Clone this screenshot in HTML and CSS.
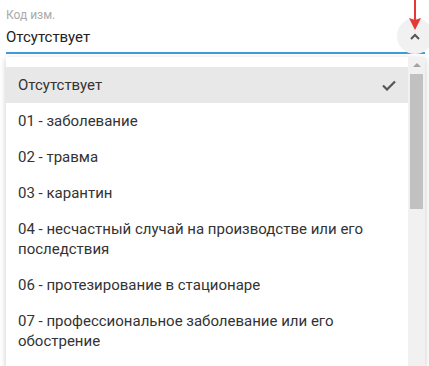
FILE: index.html
```html
<!DOCTYPE html>
<html lang="ru">
<head>
    <meta charset="UTF-8">
    <meta name="viewport" content="width=device-width, initial-scale=1.0">
    <title>Код изм.</title>
    <link rel="stylesheet" href="styles.css">
</head>
<body>

    <div class="field">
        <div class="field-label">Код изм.</div>
        <div class="field-value">Отсутствует</div>
        <div class="toggle">
            <svg width="10" height="7" viewBox="0 0 10 7">
                <path d="M1 6 L5 2 L9 6" fill="none" stroke="#555" stroke-width="2"/>
            </svg>
        </div>
        <svg class="marker" width="14" height="31" viewBox="0 0 14 31">
            <line x1="7" y1="0" x2="7" y2="21" stroke="#e53935" stroke-width="2"/>
            <path d="M1 18 L7 30 L13 18 L7 20 Z" fill="#e53935"/>
        </svg>
    </div>

    <div class="dropdown">
        <ul class="options">
            <li class="option selected">
                <span>Отсутствует</span>
                <svg width="14" height="11" viewBox="0 0 14 11">
                    <path d="M1 5.5 L5 9.5 L13 1.5" fill="none" stroke="#555" stroke-width="2.2"/>
                </svg>
            </li>
            <li class="option">01 - заболевание</li>
            <li class="option">02 - травма</li>
            <li class="option">03 - карантин</li>
            <li class="option">04 - несчастный случай на производстве или его последствия</li>
            <li class="option">06 - протезирование в стационаре</li>
            <li class="option">07 - профессиональное заболевание или его обострение</li>
        </ul>
        <div class="scrollbar">
            <div class="scroll-up"></div>
            <div class="scroll-thumb"></div>
        </div>
    </div>

</body>
</html>
```

FILE: styles.css
```css
body {
    margin: 0;
    padding: 0 4px 0 6px;
    font-family: Roboto, "Liberation Sans", sans-serif;
    background: #fff;
    overflow: hidden;
    height: 366px;
}

.field {
    position: relative;
    padding-top: 7px;
    padding-bottom: 5px;
    border-bottom: 2px solid #3d9bd8;
}

.field-label {
    font-size: 12px;
    line-height: 16px;
    color: #aaa;
}

.field-value {
    margin-top: 4px;
    font-size: 15px;
    line-height: 20px;
    color: #222;
}

.toggle {
    position: absolute;
    right: -8px;
    top: 18px;
    width: 36px;
    height: 36px;
    border-radius: 50%;
    background: #f1f1f1;
    display: flex;
    align-items: center;
    justify-content: center;
}

.marker {
    position: absolute;
    right: 3px;
    top: 0;
}

.dropdown {
    margin-top: 3px;
    height: 309px;
    display: flex;
    background: #fff;
    box-shadow: 0 2px 6px rgba(0, 0, 0, 0.22);
    overflow: hidden;
}

.options {
    list-style: none;
    margin: 0;
    padding: 10px 0 0;
    flex: 1;
}

.option {
    padding: 8px 12px;
    font-size: 15px;
    line-height: 20px;
    color: #333;
}

.selected {
    background: #e8e8e8;
    display: flex;
    justify-content: space-between;
    align-items: center;
}

.scrollbar {
    width: 17px;
    background: #f1f1f1;
    display: flex;
    flex-direction: column;
    align-items: center;
}

.scroll-up {
    margin-top: 6px;
    width: 0;
    height: 0;
    border-left: 4px solid transparent;
    border-right: 4px solid transparent;
    border-bottom: 4px solid #a3a3a3;
}

.scroll-thumb {
    margin-top: 7px;
    width: 13px;
    height: 135px;
    background: #c1c1c1;
}
```
